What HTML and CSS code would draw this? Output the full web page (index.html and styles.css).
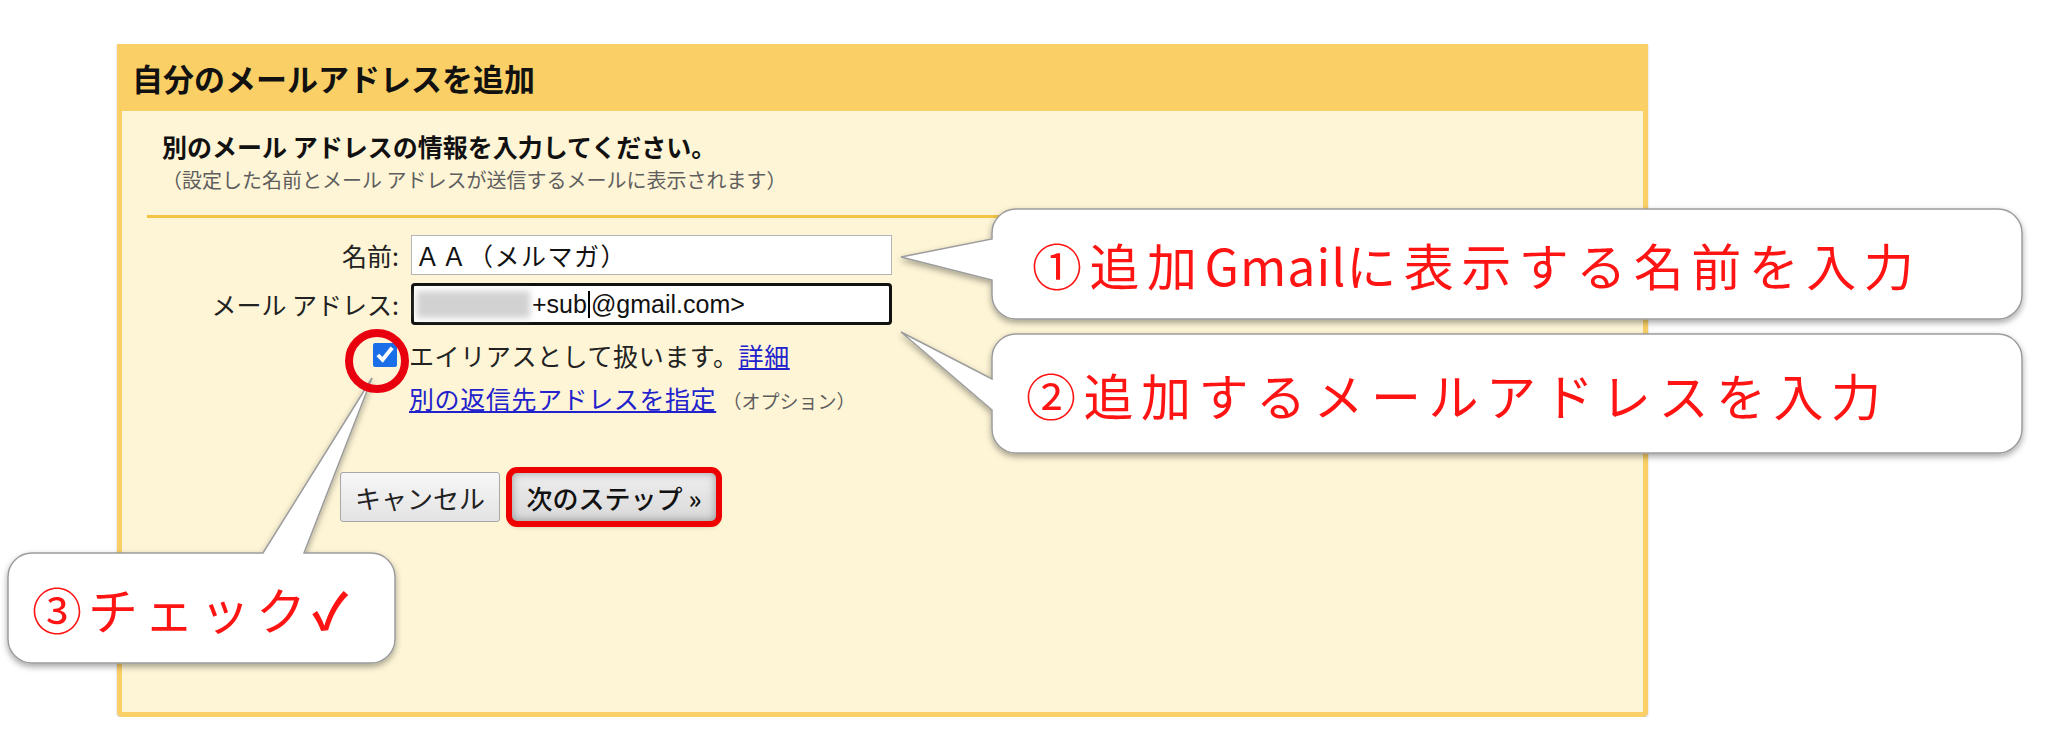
FILE: index.html
```html
<!DOCTYPE html>
<html lang="ja">
<head>
<meta charset="utf-8">
<title>自分のメールアドレスを追加</title>
<link rel="stylesheet" href="styles.css">
</head>
<body>
<div class="page">
    <div class="dialog">
        <div class="head">自分のメールアドレスを追加</div>
        <div class="body">
            <div class="intro">
                <div class="sub">別のメール アドレスの情報を入力してください。</div>
                <div class="note">（設定した名前とメール アドレスが送信するメールに表示されます）</div>
            </div>
            <div class="rule"></div>
            <div class="form">
                <label class="lbl">名前:</label>
                <div class="field">ＡＡ（メルマガ）</div>
                <label class="lbl">メール アドレス:</label>
                <div class="field focus"><span class="blur"></span>+sub<span class="caret"></span>@gmail.com&gt;</div>
                <div class="chk r3"><input type="checkbox" checked></div>
                <div class="opt r3">エイリアスとして扱います。<a href="#">詳細</a></div>
                <span class="r4"></span>
                <div class="opt r4"><a href="#">別の返信先アドレスを指定</a> <span class="hint">（オプション）</span></div>
            </div>
            <div class="buttons">
                <button class="btn cancel">キャンセル</button>
                <button class="btn next">次のステップ »</button>
            </div>
        </div>
    </div>
</div>

<!-- annotation layer -->
<svg class="marks" width="2048" height="734" viewBox="0 0 2048 734">
    <defs>
        <filter id="sh" x="-5%" y="-10%" width="110%" height="130%">
            <feDropShadow dx="0" dy="3" stdDeviation="3" flood-color="#000" flood-opacity="0.35"/>
        </filter>
    </defs>
    <g fill="#fff" stroke="#9c9c9c" stroke-width="1.5" filter="url(#sh)">
        <path d="M1016,209 H1998 A24,24 0 0 1 2022,233 V295 A24,24 0 0 1 1998,319 H1016 A24,24 0 0 1 992,295 V280 L901,257 L992,239 V233 A24,24 0 0 1 1016,209 Z"/>
        <path d="M1016,334 H1998 A24,24 0 0 1 2022,358 V429 A24,24 0 0 1 1998,453 H1016 A24,24 0 0 1 992,429 V410 L901,332 L992,379 V358 A24,24 0 0 1 1016,334 Z"/>
        <path d="M32,553 H263 L372,378 L304,553 H371 A24,24 0 0 1 395,577 V639 A24,24 0 0 1 371,663 H32 A24,24 0 0 1 8,639 V577 A24,24 0 0 1 32,553 Z"/>
    </g>
    <circle cx="377" cy="361" r="28" fill="none" stroke="#e8000e" stroke-width="8"/>
</svg>
<div class="tip tip1">①追加<span class="lat">Gmail</span>に表示する名前を入力</div>
<div class="tip tip2">②追加するメールアドレスを入力</div>
<div class="tip tip3">③チェック<b>✓</b></div>
</body>
</html>
```

FILE: styles.css
```css
html, body {margin:0; background:#fff;}
body {font-family:"Noto Sans CJK JP", "Noto Sans", sans-serif; color:#222;}

.page {padding:44px 0 0 117px;}
.dialog {width:1531px; height:673px; box-sizing:border-box; display:flex; flex-direction:column;
    background:#f9cf66; border-radius:0 0 5px 5px; box-shadow:0 1px 2px rgba(0,0,0,0.25);}
.head {height:67px; line-height:67px; padding-left:15px; font-size:31px; font-weight:bold; color:#111;}
.body {flex:1; margin:0 5px 5px; background:#fef5d6;}

.intro {padding:21px 0 0 40px;}
.sub {font-size:25px; line-height:28px; font-weight:bold; color:#111;}
.note {margin-top:9px; font-size:20px; line-height:22px; color:#5e5e5e;}
.rule {height:3px; margin:24px 25px 0; background:#f5c344;}

.form {display:grid; grid-template-columns:277px 481px; column-gap:12px; row-gap:8px; margin-top:17px;}
.lbl {justify-self:end; align-self:center; font-size:25px; color:#222;}
.field {height:40px; box-sizing:border-box; display:flex; align-items:center; padding:0 3px;
    border:1px solid #b5b5b5; background:#fff; font-size:25px; letter-spacing:1.5px; white-space:nowrap; color:#111;}
.field.focus {height:42px; padding-left:3px; border:3px solid #111; border-radius:4px;
    font-family:"Liberation Sans", "Noto Sans CJK JP", sans-serif; letter-spacing:0;}
.blur {display:inline-block; width:113px; height:27px; margin-right:2px; background:#d2d2d2; filter:blur(3px);}
.caret {display:inline-block; width:2px; height:27px; margin:0 1px; background:#000;}

.r3 {margin-top:7px;}
.r4 {margin-top:5px;}
.chk {justify-self:end; display:flex; align-items:center; height:30px; margin-right:2px;}
.chk input {width:24px; height:24px; margin:0; accent-color:#1a6fe8;}
.opt {margin-left:-2px; font-size:25px; line-height:30px; letter-spacing:0.6px; color:#222; white-space:nowrap;}
.opt a {color:#2222cc; text-decoration:underline;}
.hint {font-size:19px; letter-spacing:0; color:#5e5e5e;}

.buttons {display:flex; gap:11px; margin-top:56px; padding-left:218px;}
.btn {height:50px; padding:0; font-family:inherit; font-size:26px; color:#222;
    border:1px solid #a8a8a8; border-radius:3px; background:linear-gradient(#f7f7f7, #e3e3e3);}
.cancel {width:160px;}
.next {width:206px; color:#111; font-weight:500; border-radius:6px; background:linear-gradient(#eeeeee, #d9d9d9);
    outline:6px solid #ee0000; outline-offset:-1px;
    box-shadow:inset 0 0 8px rgba(0,0,0,0.35), 0 3px 6px rgba(0,0,0,0.35);}

/* annotations */
.marks {position:absolute; left:0; top:0; pointer-events:none;}
.tip {position:absolute; display:flex; align-items:center; box-sizing:border-box;
    font-size:50px; letter-spacing:7.5px; color:#ff1414; white-space:nowrap;}
.tip .lat {letter-spacing:1px;}
.tip b {font-weight:bold;}
.tip1 {left:992px; top:209px; width:1030px; height:110px; padding-left:40px;}
.tip2 {left:992px; top:334px; width:1030px; height:119px; padding-left:34px;}
.tip3 {left:8px; top:553px; width:387px; height:110px; padding-left:24px; letter-spacing:6px;}
```
